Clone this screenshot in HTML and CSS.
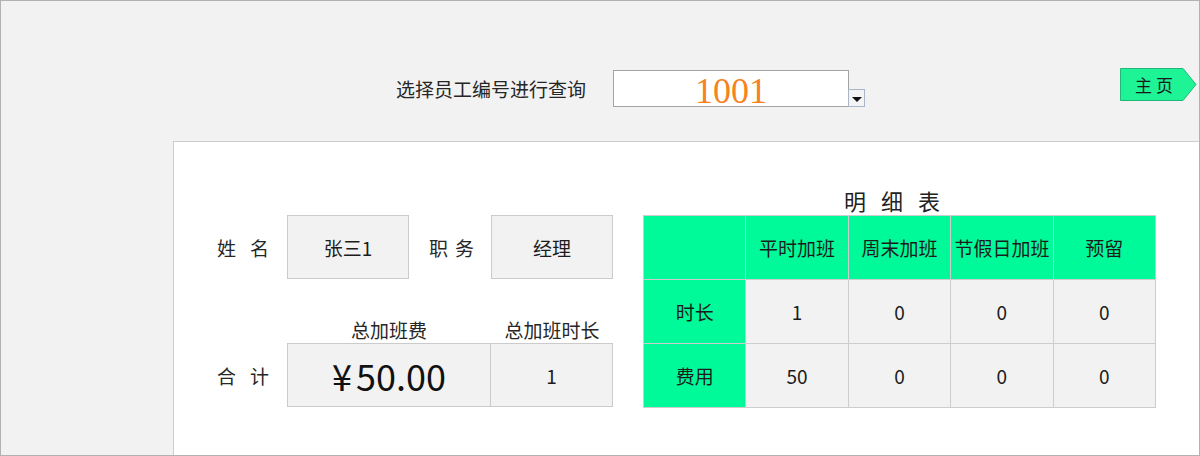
FILE: index.html
```html
<!DOCTYPE html>
<html lang="zh-CN">
<head>
    <meta charset="UTF-8">
    <title>加班查询</title>
    <link rel="stylesheet" href="styles.css">
</head>
<body>
<div id="frame">
    <div id="top">
        <div class="query">
            <span class="query-label">选择员工编号进行查询</span>
            <div class="query-input">1001</div>
            <div class="query-drop"><i></i></div>
        </div>
        <div class="home">
            <svg width="77" height="33" viewBox="0 0 77 33">
                <polygon points="0.5,0.5 63,0.5 76,16.5 63,32.5 0.5,32.5" fill="#1ef396" stroke="#22b77a" stroke-width="1"/>
            </svg>
            <span class="home-text">主页</span>
        </div>
    </div>
    <div id="panel">
        <div class="info">
            <div class="lbl">姓名</div>
            <div class="cell">张三1</div>
            <div class="lbl lbl-job">职务</div>
            <div class="cell">经理</div>

            <div class="cap cap-fee">总加班费</div>
            <div class="cap">总加班时长</div>

            <div class="lbl">合计</div>
            <div class="cell cell-money"><span class="yen">¥</span>50.00</div>
            <div class="cell cell-hours">1</div>
        </div>
        <div class="detail">
            <div class="detail-title">明细表</div>
            <div class="grid">
                <div class="g"></div>
                <div class="g">平时加班</div>
                <div class="g">周末加班</div>
                <div class="g">节假日加班</div>
                <div class="g">预留</div>

                <div class="g">时长</div>
                <div>1</div>
                <div>0</div>
                <div>0</div>
                <div>0</div>

                <div class="g">费用</div>
                <div>50</div>
                <div>0</div>
                <div>0</div>
                <div>0</div>
            </div>
        </div>
    </div>
</div>
</body>
</html>
```

FILE: styles.css
```css
* {
    margin: 0;
    padding: 0;
    box-sizing: border-box;
}

body {
    font-family: "Noto Sans CJK SC", "Noto Sans", sans-serif;
    color: #1c1c1c;
}

#frame {
    display: flex;
    flex-direction: column;
    width: 1200px;
    height: 456px;
    border: 1px solid #b2b2b2;
    background-color: #f2f2f2;
}

#top {
    display: flex;
    align-items: flex-start;
    height: 140px;
}

.query {
    display: flex;
    margin: 69px 0 0 395px;
}
.query-label {
    font-size: 19px;
    line-height: 37px;
    color: #262626;
}
.query-input {
    width: 236px;
    height: 37px;
    margin-left: 27px;
    border: 1px solid #a3a3a3;
    background-color: #fff;
    font-family: "Liberation Serif", serif;
    font-size: 36px;
    line-height: 41px;
    color: #f5841f;
    text-align: center;
}
.query-drop {
    display: flex;
    align-items: center;
    justify-content: center;
    align-self: flex-end;
    width: 17px;
    height: 18px;
    margin-left: -1px;
    border: 1px solid #a9b6c8;
    background-color: #f4f4f4;
}
.query-drop i {
    width: 0;
    height: 0;
    border-left: 5px solid transparent;
    border-right: 5px solid transparent;
    border-top: 5px solid #111;
    margin-top: 2px;
}

.home {
    position: relative;
    margin: 67px 2px 0 auto;
    width: 77px;
    height: 33px;
}
.home svg {
    display: block;
}
.home-text {
    position: absolute;
    top: 0;
    left: 15px;
    font-size: 17px;
    line-height: 33px;
    letter-spacing: 4px;
    color: #1a1a1a;
}

#panel {
    display: flex;
    align-items: flex-start;
    flex: 1;
    margin-left: 172px;
    padding-top: 43px;
    border: 1px solid #cdcdcd;
    border-right: none;
    border-bottom: none;
    background-color: #fff;
}

.info {
    display: grid;
    grid-template-columns: 113px 122px 82px 122px;
    grid-template-rows: 64px 64px 64px;
    margin-top: 30px;
    font-size: 19px;
}
.lbl {
    display: flex;
    align-items: center;
    padding-left: 43px;
    letter-spacing: 14px;
    color: #262626;
}
.lbl-job {
    padding-left: 20px;
    letter-spacing: 7px;
}
.cell {
    display: flex;
    align-items: center;
    justify-content: center;
    border: 1px solid #cbcbcb;
    background-color: #f2f2f2;
}
.cap {
    align-self: end;
    line-height: 27px;
    text-align: center;
    color: #262626;
}
.cap-fee {
    grid-column: 2 / 4;
}
.cell-money {
    grid-column: 2 / 4;
    font-size: 36px;
    color: #111;
}
.yen {
    margin-right: 4px;
}
.cell-hours {
    margin-left: -1px;
}

.detail {
    margin-left: 30px;
}
.detail-title {
    height: 30px;
    font-size: 22px;
    line-height: 30px;
    letter-spacing: 15px;
    text-align: center;
    color: #222;
}
.grid {
    display: grid;
    grid-template-columns: repeat(5, 1fr);
    grid-template-rows: repeat(3, 63px);
    gap: 1px;
    width: 513px;
    padding: 1px;
    background-color: #cdcdcd;
    font-size: 19px;
}
.grid div {
    display: flex;
    align-items: center;
    justify-content: center;
    background-color: #f2f2f2;
}
.grid div.g {
    background-color: #00fa9a;
}
```
